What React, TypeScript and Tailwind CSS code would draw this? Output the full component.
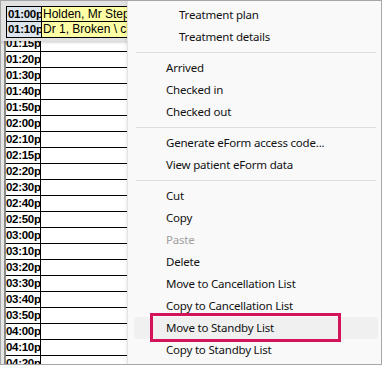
import React from 'react';

const times = [
  '', '', '01:15p', '01:20p', '01:30p', '01:40p', '01:50p',
  '02:00p', '02:10p', '02:15p', '02:20p', '02:30p', '02:40p', '02:50p',
  '03:00p', '03:10p', '03:20p', '03:30p', '03:40p', '03:50p',
  '04:00p', '04:10p', '04:20p',
];

type Item =
  | { sep: true }
  | { label: string; indent?: boolean; disabled?: boolean; hover?: boolean };

const items: Item[] = [
  { label: 'Treatment plan', indent: true },
  { label: 'Treatment details', indent: true },
  { sep: true },
  { label: 'Arrived' },
  { label: 'Checked in' },
  { label: 'Checked out' },
  { sep: true },
  { label: 'Generate eForm access code...' },
  { label: 'View patient eForm data' },
  { sep: true },
  { label: 'Cut' },
  { label: 'Copy' },
  { label: 'Paste', disabled: true },
  { label: 'Delete' },
  { label: 'Move to Cancellation List' },
  { label: 'Copy to Cancellation List' },
  { label: 'Move to Standby List', hover: true },
  { label: 'Copy to Standby List' },
];

function Schedule() {
  return (
    <div className="relative w-[126px] shrink-0 bg-[#e6e6e6] pt-[2px] pl-[3px] overflow-hidden">
      <div className="border-l-2 border-[#8a8a8a] bg-white">
        {times.map((t, i) => (
          <div key={i} className="flex h-[16px] border-t border-black">
            <div className="w-[35px] shrink-0 border-r border-black text-[11.5px] font-bold leading-[15px] text-black tracking-[-0.3px] whitespace-nowrap overflow-hidden">
              {t}
            </div>
            <div className="flex-1" />
          </div>
        ))}
      </div>

      {/* appointment being dragged */}
      <div className="absolute left-0 top-0 w-[140px] bg-[#e2e2e2] pt-[5px] pl-[5px] pb-[3px] shadow-[0_2px_2px_rgba(0,0,0,0.15)]">
        <div className="border border-black bg-black">
          {[
            ['01:00p', 'Holden, Mr Stephen'],
            ['01:10p', 'Dr 1, Broken \\ chipped'],
          ].map(([t, txt], i) => (
            <div key={t} className={`flex h-[15px] ${i === 0 ? 'border-b border-black' : ''}`}>
              <div className="w-[35px] shrink-0 border-r border-black bg-[#dce5ee] text-[11.5px] font-bold leading-[15px] pl-px tracking-[-0.3px] text-black whitespace-nowrap overflow-hidden">
                {t}
              </div>
              <div className="flex-1 bg-[#ffffa6] text-[12px] leading-[15px] pl-px whitespace-nowrap overflow-hidden text-black">
                {txt}
              </div>
            </div>
          ))}
        </div>
      </div>
    </div>
  );
}

function Menu() {
  return (
    <div className="relative z-10 flex-1 bg-[#f9f9f9] border-l border-[#e3e3e3] pt-[3px] shadow-[-1px_0_3px_rgba(0,0,0,0.08)] font-['Noto_Sans',sans-serif] text-[11.5px] tracking-[-0.2px]">
      {items.map((it, i) =>
        'sep' in it ? (
          <div key={i} className="h-[9px] flex items-center pl-[8px] pr-[5px]">
            <div className="h-px w-full bg-[#dedede]" />
          </div>
        ) : (
          <div
            key={i}
            className={`relative h-[22px] ml-[6px] mr-[3px] flex items-center rounded-[4px] whitespace-nowrap ${
              it.indent ? 'pl-[45px]' : 'pl-[32px]'
            } ${it.hover ? 'bg-[#f0f0f0]' : ''} ${it.disabled ? 'text-[#a0a0a0]' : 'text-[#111]'}`}
          >
            {it.label}
            {it.hover && (
              <div className="absolute left-[16px] top-[-4px] w-[191px] h-[29px] border-[3px] border-[#d3145a]" />
            )}
          </div>
        )
      )}
    </div>
  );
}

export default function App() {
  return (
    <div className="w-[382px] h-[365px] border border-[#a6a6a6] flex overflow-hidden bg-white font-['Liberation_Sans',Arial,sans-serif]">
      <Schedule />
      <Menu />
    </div>
  );
}
